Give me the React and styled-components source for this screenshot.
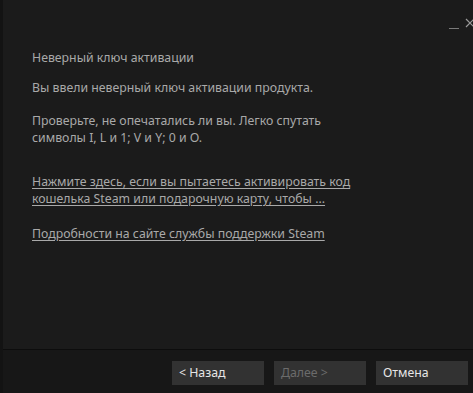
import React from "react";
import styled, { createGlobalStyle } from "styled-components";

const Global = createGlobalStyle`
  html, body { margin: 0; padding: 0; background: #1b1b1b; }
  body { font-family: "Noto Sans", "Open Sans", sans-serif; }
`;

const Window = styled.div`
  width: 473px;
  height: 393px;
  display: flex;
  flex-direction: column;
  background: #1b1b1b;
  border-left: 3px solid #131313;
  box-sizing: border-box;
  overflow: hidden;
`;

const TitleBar = styled.div`
  height: 42px;
  display: flex;
  justify-content: flex-end;
  align-items: flex-start;
  padding-top: 18px;
  box-sizing: border-box;
  gap: 6px;
  margin-right: -2px;
`;

const Content = styled.div`
  flex: 1;
  padding: 7px 0 0 29px;
  color: #a9a9a9;
  font-size: 12.3px;
  line-height: 17px;
`;

const Para = styled.p`
  margin: 0 0 ${(p) => p.$gap || 13}px 0;
  color: #a9a9a9;
`;

const Link = styled.a`
  color: #a9a9a9;
  text-decoration: underline;
  text-underline-offset: 2px;
  display: block;
  margin-bottom: ${(p) => p.$gap || 0}px;
`;

const Footer = styled.div`
  height: 44px;
  border-top: 1px solid #0d0d0d;
  background: #171717;
  display: flex;
  justify-content: flex-end;
  align-items: flex-start;
  gap: 10px;
  padding: 11px 5px 0 0;
  box-sizing: border-box;
`;

const Button = styled.button`
  width: 92px;
  height: 24px;
  border: none;
  background: #323232;
  color: ${(p) => (p.disabled ? "#6b6b6b" : "#e6e6e6")};
  font-family: "Noto Sans", "Open Sans", sans-serif;
  font-size: 12.3px;
  text-align: left;
  padding: 0 0 0 7px;
  line-height: 24px;
`;

const Ctrl = styled.svg`
  display: block;
`;

export default function App() {
  return (
    <>
      <Global />
      <Window>
        <TitleBar>
          <Ctrl width="10" height="11" viewBox="0 0 10 11">
            <line x1="0" y1="10.5" x2="10" y2="10.5" stroke="#7a7a7a" strokeWidth="1" />
          </Ctrl>
          <Ctrl width="10" height="11" viewBox="0 0 10 11">
            <path d="M1 1 L9 9 M9 1 L1 9" stroke="#9a9a9a" strokeWidth="1.2" />
          </Ctrl>
        </TitleBar>
        <Content>
          <Para $gap={13}>Неверный ключ активации</Para>
          <Para $gap={16}>Вы ввели неверный ключ активации продукта.</Para>
          <Para $gap={27}>
            Проверьте, не опечатались ли вы. Легко спутать
            <br />
            символы I, L и 1; V и Y; 0 и O.
          </Para>
          <Link href="#" $gap={18}>
            Нажмите здесь, если вы пытаетесь активировать код
            <br />
            кошелька Steam или подарочную карту, чтобы ...
          </Link>
          <Link href="#">Подробности на сайте службы поддержки Steam</Link>
        </Content>
        <Footer>
          <Button>&lt; Назад</Button>
          <Button disabled>Далее &gt;</Button>
          <Button>Отмена</Button>
        </Footer>
      </Window>
    </>
  );
}
